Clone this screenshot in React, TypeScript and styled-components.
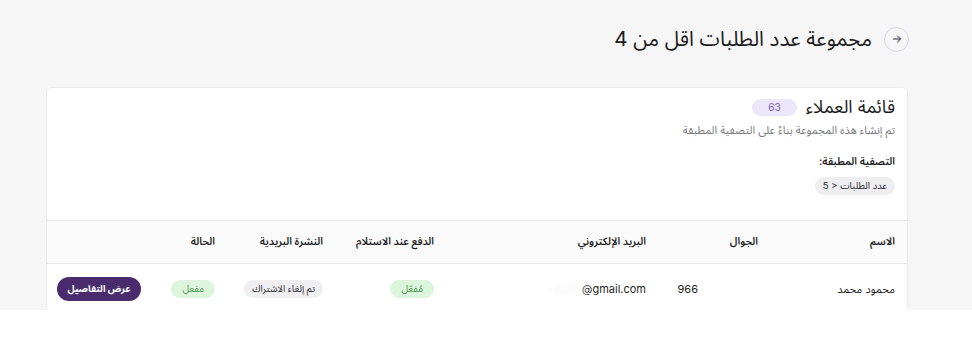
import React from "react";
import styled, { createGlobalStyle } from "styled-components";

const GlobalStyle = createGlobalStyle`
  html, body { margin: 0; padding: 0; background: #ffffff; }
  body {
    font-family: Inter, "Noto Sans Arabic", "DejaVu Sans", sans-serif;
    color: #1f1f24;
    line-height: 1.2;
  }
  * { box-sizing: border-box; }
`;

const Page = styled.div`
  direction: rtl;
  height: 310px;
  overflow: hidden;
  background: #f6f6f6;
  padding: 26px 63px 0 46px;
`;

const TopBar = styled.div`
  display: flex;
  align-items: center;
  gap: 12px;
  height: 26px;
`;

const BackButton = styled.button`
  width: 25px;
  height: 25px;
  border-radius: 50%;
  border: 1px solid #d8d8e2;
  background: transparent;
  display: flex;
  align-items: center;
  justify-content: center;
  padding: 0;
  color: #25253a;
  flex: none;
`;

const PageTitle = styled.h1`
  margin: 0;
  font-size: 20.5px;
  line-height: 26px;
  font-weight: 400;
  color: #1c1c22;
  white-space: nowrap;
`;

const Card = styled.div`
  margin-top: 35px;
  margin-right: 1px;
  background: #fff;
  border: 1px solid #ececec;
  border-radius: 6px;
`;

const CardHead = styled.div`
  padding: 8px 12px 24px;
  display: flex;
  flex-direction: column;
  align-items: flex-start;
`;

const TitleRow = styled.div`
  display: flex;
  align-items: center;
  gap: 9px;
  height: 22px;
`;

const CardTitle = styled.h2`
  margin: 0;
  font-size: 18px;
  line-height: 22px;
  font-weight: 400;
  color: #1c1c22;
  white-space: nowrap;
`;

const CountBadge = styled.span`
  background: #ece6fb;
  color: #7c62c6;
  font-size: 10px;
  line-height: 17px;
  border-radius: 9px;
  padding: 0 16px;
  height: 17px;
  display: inline-flex;
  align-items: center;
`;

const Subtitle = styled.p`
  margin: 4px 0 0;
  font-size: 11px;
  line-height: 16px;
  color: #7a7a80;
  white-space: nowrap;
`;

const FilterLabel = styled.div`
  margin-top: 16px;
  font-size: 10.5px;
  line-height: 16px;
  font-weight: 600;
  color: #1c1c22;
  white-space: nowrap;
`;

const FilterChip = styled.span`
  margin-top: 7px;
  background: #eeeef0;
  color: #2a2a30;
  font-size: 9.5px;
  line-height: 18px;
  border-radius: 9px;
  padding: 0 8px;
  height: 18px;
  display: inline-flex;
  align-items: center;
  white-space: nowrap;
`;

const cols = "137px 112px 212px 111px 108px 72px 1fr";

const HeadRow = styled.div`
  display: grid;
  grid-template-columns: ${cols};
  height: 44px;
  margin-top: 1px;
  align-items: center;
  background: #fafafa;
  border-top: 1px solid #e9e9ec;
  border-bottom: 1px solid #e9e9ec;
`;

const HeadCell = styled.div`
  padding: 0 12px;
  font-size: 10.5px;
  line-height: 16px;
  font-weight: 600;
  color: #1f1f24;
  text-align: right;
  white-space: nowrap;
`;

const BodyRow = styled.div`
  display: grid;
  grid-template-columns: ${cols};
  height: 50px;
  align-items: center;
`;

const Cell = styled.div<{ $ltr?: boolean; $end?: boolean }>`
  padding: 0 12px 0 ${(p) => (p.$end ? "10px" : "12px")};
  font-size: 11px;
  line-height: 16px;
  color: #1f1f24;
  display: flex;
  align-items: center;
  white-space: nowrap;
  direction: ${(p) => (p.$ltr ? "ltr" : "rtl")};
  justify-content: ${(p) => (p.$end || p.$ltr ? "flex-end" : "flex-start")};
`;

const Redacted = styled.span<{ $w: number; $shade: string }>`
  display: inline-block;
  width: ${(p) => p.$w}px;
  height: 8px;
  filter: blur(3px);
  background: ${(p) => p.$shade};
`;

const Pill = styled.span<{ $tone: "green" | "gray" }>`
  height: 18px;
  line-height: 18px;
  border-radius: 9px;
  padding: 0 ${(p) => (p.$tone === "green" ? "11px" : "8px")};
  display: inline-flex;
  align-items: center;
  font-size: 9.5px;
  white-space: nowrap;
  background: ${(p) => (p.$tone === "green" ? "#dcf5dc" : "#efeff1")};
  color: ${(p) => (p.$tone === "green" ? "#4b9a55" : "#2c2c33")};
`;

const DetailsButton = styled.button`
  height: 24px;
  width: 84px;
  border: none;
  border-radius: 12px;
  background: #4a2c6e;
  color: #fff;
  font-family: inherit;
  font-size: 9.5px;
  line-height: 24px;
  font-weight: 700;
  padding: 0;
  white-space: nowrap;
`;

export default function App() {
  return (
    <>
      <GlobalStyle />
      <Page>
        <TopBar>
          <BackButton aria-label="back">
            <svg width="12" height="12" viewBox="0 0 24 24" fill="none" stroke="currentColor" strokeWidth="2" strokeLinecap="round" strokeLinejoin="round">
              <path d="M5 12h14" />
              <path d="M13 6l6 6-6 6" />
            </svg>
          </BackButton>
          <PageTitle>مجموعة عدد الطلبات اقل من 4</PageTitle>
        </TopBar>
        <Card>
          <CardHead>
            <TitleRow>
              <CardTitle>قائمة العملاء</CardTitle>
              <CountBadge>63</CountBadge>
            </TitleRow>
            <Subtitle>تم إنشاء هذه المجموعة بناءً على التصفية المطبقة</Subtitle>
            <FilterLabel>التصفية المطبقة:</FilterLabel>
            <FilterChip>عدد الطلبات &lt; 5</FilterChip>
          </CardHead>
          <HeadRow>
            <HeadCell>الاسم</HeadCell>
            <HeadCell>الجوال</HeadCell>
            <HeadCell>البريد الإلكتروني</HeadCell>
            <HeadCell>الدفع عند الاستلام</HeadCell>
            <HeadCell>النشرة البريدية</HeadCell>
            <HeadCell>الحالة</HeadCell>
            <HeadCell />
          </HeadRow>
          <BodyRow>
            <Cell>محمود محمد</Cell>
            <Cell $ltr>
              <span>966</span>
              <Redacted $w={60} $shade="transparent" />
            </Cell>
            <Cell $ltr>
              <Redacted $w={30} $shade="#f9f9f9" />
              <span>@gmail.com</span>
            </Cell>
            <Cell>
              <Pill $tone="green">مُفعّل</Pill>
            </Cell>
            <Cell>
              <Pill $tone="gray">تم إلغاء الاشتراك</Pill>
            </Cell>
            <Cell>
              <Pill $tone="green">مفعل</Pill>
            </Cell>
            <Cell $end>
              <DetailsButton>عرض التفاصيل</DetailsButton>
            </Cell>
          </BodyRow>
        </Card>
      </Page>
    </>
  );
}
